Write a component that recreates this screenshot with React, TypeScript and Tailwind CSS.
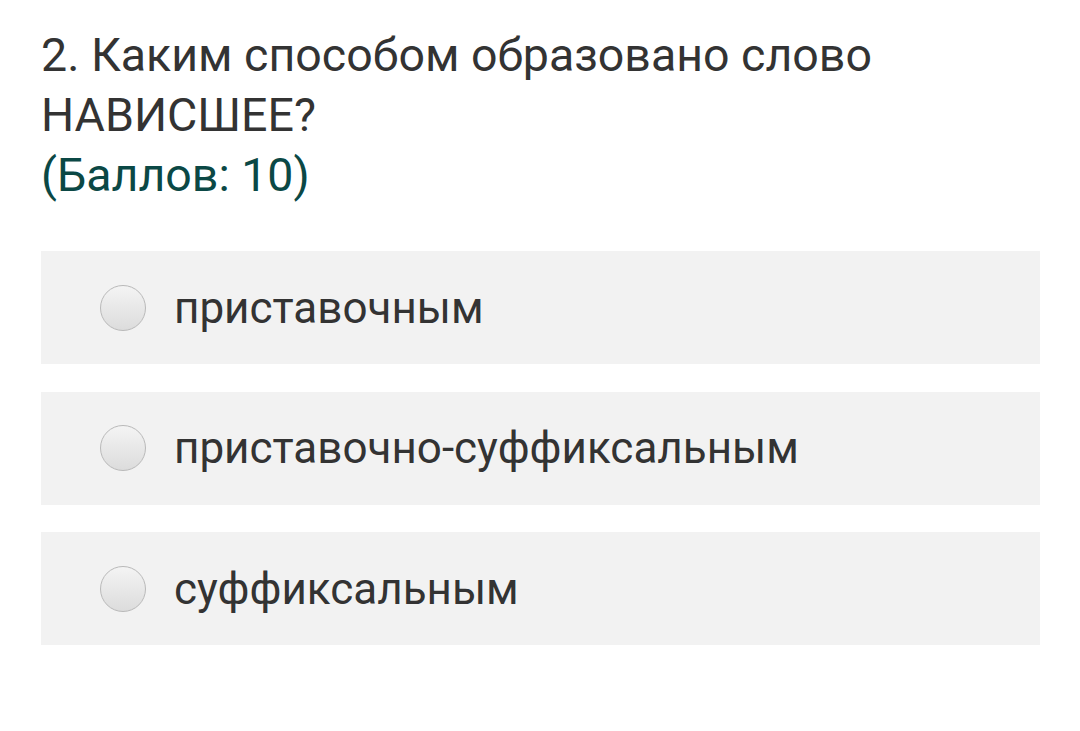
const options = ["приставочным", "приставочно-суффиксальным", "суффиксальным"];

const Radio = () => (
  <span className="block h-[46px] w-[46px] shrink-0 rounded-full border border-[#b9b9b9] bg-gradient-to-b from-[#f4f4f4] to-[#dcdcdc]" />
);

export default function App() {
  return (
    <div className="min-h-[731px] w-[1080px] bg-white font-['Roboto',sans-serif]">
      <div className="px-[41px] pt-[25px]">
        <h2 className="text-[46.5px] leading-[60px] text-[#333333] font-normal">
          2. Каким способом образовано слово
          <br />
          НАВИСШЕЕ?
          <br />
          <span className="text-[#0b4845]">(Баллов: 10)</span>
        </h2>
        <ul className="mt-[46px] flex w-[999px] flex-col gap-[27.5px]">
          {options.map((opt) => (
            <li
              key={opt}
              className="flex h-[113px] items-center gap-[28px] bg-[#f2f2f2] pl-[59px]"
            >
              <Radio />
              <span className="text-[44px] leading-none text-[#333333]">{opt}</span>
            </li>
          ))}
        </ul>
      </div>
    </div>
  );
}
